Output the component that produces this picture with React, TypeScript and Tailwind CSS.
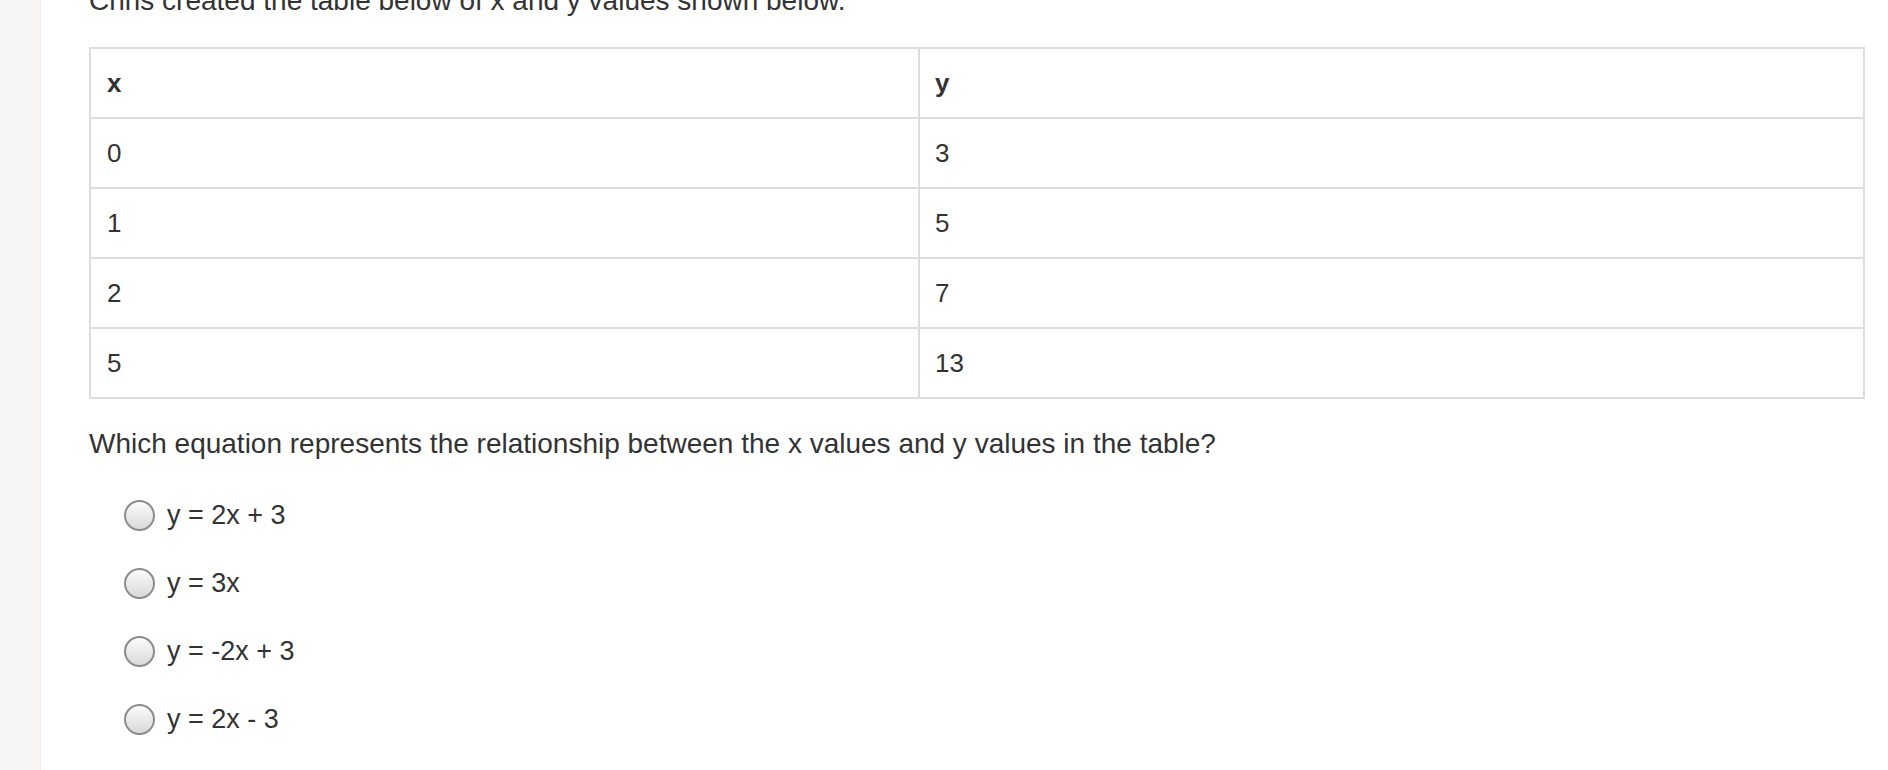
import React from "react";

const rows: [string, string][] = [
  ["0", "3"],
  ["1", "5"],
  ["2", "7"],
  ["5", "13"],
];

const choices = ["y = 2x + 3", "y = 3x", "y = -2x + 3", "y = 2x - 3"];

const App: React.FC = () => {
  return (
    <div className="flex h-[770px] w-full overflow-hidden bg-white font-['Liberation_Sans',Arial,sans-serif] text-[26px] text-[#333]">
      {/* Left rail */}
      <div className="w-[41px] shrink-0 border-r border-[#ececea] bg-[#f6f5f3]" />

      {/* Question body */}
      <div className="min-w-0 flex-1 pl-[48px] pr-[23px]">
        <p className="-mt-[17px] mb-[28px] text-[28px] leading-[36px]">
          Chris created the table below of x and y values shown below.
        </p>

        <table className="w-full border-collapse border-2 border-[#dddddd]">
          <thead>
            <tr>
              <th className="h-[70px] w-[829px] border-2 border-[#dddddd] px-[16px] text-left font-bold">
                x
              </th>
              <th className="h-[70px] border-2 border-[#dddddd] px-[15px] text-left font-bold">
                y
              </th>
            </tr>
          </thead>
          <tbody>
            {rows.map(([x, y], i) => (
              <tr key={i}>
                <td className="h-[70px] border-2 border-[#dddddd] px-[16px]">{x}</td>
                <td className="h-[70px] border-2 border-[#dddddd] px-[15px]">{y}</td>
              </tr>
            ))}
          </tbody>
        </table>

        <p className="mt-[27px] text-[28px] leading-[36px]">
          Which equation represents the relationship between the x values and y values in the table?
        </p>

        <div className="mt-[35px] flex flex-col gap-[32px] pl-[35px]">
          {choices.map((c) => (
            <label key={c} className="flex h-[36px] items-center gap-[12px]">
              <span className="h-[31px] w-[31px] shrink-0 rounded-full border-2 border-[#8c8c8c] bg-linear-to-b from-[#fbfbfb] to-[#d9d9d9]" />
              <span className="text-[27px] leading-[36px]">{c}</span>
            </label>
          ))}
        </div>
      </div>
    </div>
  );
};

export default App;
